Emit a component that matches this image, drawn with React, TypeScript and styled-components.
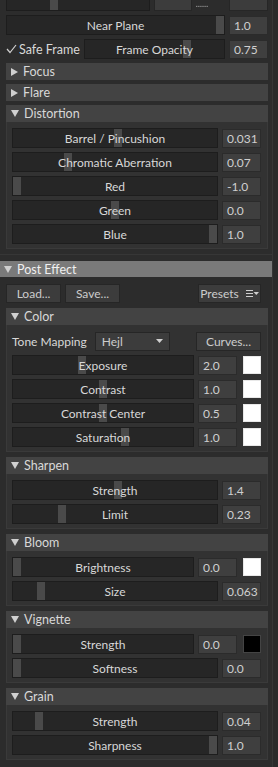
import React from 'react'
import styled, { createGlobalStyle } from 'styled-components'

const GlobalStyle = createGlobalStyle`
  html, body {
    margin: 0;
    padding: 0;
    background: #2c2c2c;
  }
  body {
    font-family: Lato, "Noto Sans", sans-serif;
    font-size: 12px;
    color: #d2d2d2;
  }
`

const Root = styled.div`
  display: flex;
  width: 278px;
  height: 767px;
  overflow: hidden;
  background: #2c2c2c;
`

const Main = styled.div`
  width: 272px;
  display: flex;
  flex-direction: column;
`

const ScrollTrack = styled.div`
  width: 6px;
  background: #2a2a2a;
  border-left: 1px solid #363636;
`

const TopBody = styled.div`
  display: flex;
  flex-direction: column;
  gap: 4px;
  margin-top: -9px;
  padding: 0 4px 5px 6px;
  border-bottom: 1px solid #363636;
`

const SectionHeader = styled.div`
  display: flex;
  align-items: center;
  gap: 5px;
  height: 16px;
  margin-top: 6px;
  padding-left: 4px;
  background: #7a7a7a;
  color: #f0f0f0;
  font-size: 12.5px;
`

const SectionBody = styled.div`
  display: flex;
  flex-direction: column;
  gap: 5px;
  padding: 6px 4px 6px 6px;
`

const SubHeader = styled.div`
  display: flex;
  align-items: center;
  gap: 5px;
  height: 17px;
  padding-left: 5px;
  background: #434343;
  color: #d8d8d8;
  font-size: 12.5px;
`

const SubBody = styled.div`
  display: flex;
  flex-direction: column;
  gap: 4px;
  padding: 6px 6px 4px 5px;
  background: #323232;
  border: 1px solid #3a3a3a;
  border-top: none;
`

const Row = styled.div`
  display: flex;
  align-items: center;
  gap: 4px;
  height: 20px;
`

const Track = styled.div<{ $width?: number }>`
  position: relative;
  flex: ${({ $width }) => ($width ? `0 0 ${$width}px` : '1')};
  height: 20px;
  box-sizing: border-box;
  background: #262626;
  border: 1px solid #1d1d1d;
  display: flex;
  align-items: center;
  justify-content: center;
  overflow: hidden;
`

const Handle = styled.div`
  position: absolute;
  top: 0;
  bottom: 0;
  width: 8px;
  background: #4a4a4a;
`

const TrackLabel = styled.span`
  position: relative;
  color: #d8d8d8;
  white-space: nowrap;
`

const ValueBox = styled.div`
  flex: 0 0 39px;
  height: 19px;
  box-sizing: border-box;
  padding-left: 4px;
  display: flex;
  align-items: center;
  background: #3f3f3f;
  border: 1px solid #2b2b2b;
  color: #cfcfcf;
`

const Swatch = styled.div<{ $color: string }>`
  flex: 0 0 18px;
  height: 18px;
  margin-left: 2px;
  box-sizing: border-box;
  background: ${({ $color }) => $color};
  border: 1px solid ${({ $color }) => ($color === '#000' ? '#444' : '#e8e8e8')};
`

const Button = styled.div<{ $width: number }>`
  flex: 0 0 ${({ $width }) => $width}px;
  height: 19px;
  box-sizing: border-box;
  display: flex;
  align-items: center;
  justify-content: center;
  gap: 7px;
  background: #3c3c3c;
  border: 1px solid #262626;
  color: #cccccc;
`

const Spacer = styled.div<{ $width?: number }>`
  flex: ${({ $width }) => ($width ? `0 0 ${$width}px` : '1')};
`

const CheckLabel = styled.div`
  display: flex;
  align-items: center;
  gap: 2px;
  flex: 0 0 72px;
  white-space: nowrap;
  color: #d8d8d8;
  font-size: 12.5px;
`

const PlainLabel = styled.span`
  color: #d8d8d8;
  white-space: nowrap;
  margin-right: 4px;
`

const Dropdown = styled.div`
  flex: 0 0 75px;
  height: 19px;
  box-sizing: border-box;
  display: flex;
  align-items: center;
  justify-content: space-between;
  padding: 0 6px;
  background: #3c3c3c;
  border: 1px solid #262626;
  color: #cccccc;
`

const Arrow = ({ open }: { open: boolean }) =>
  open ? (
    <svg width="8" height="7" viewBox="0 0 8 7">
      <polygon points="0,0 8,0 4,7" fill="#d0d0d0" />
    </svg>
  ) : (
    <svg width="7" height="8" viewBox="0 0 7 8">
      <polygon points="0,0 7,4 0,8" fill="#d0d0d0" />
    </svg>
  )

const Check = () => (
  <svg width="11" height="10" viewBox="0 0 11 10">
    <polyline points="1,5 4,8.5 10,1" fill="none" stroke="#d0d0d0" strokeWidth="1.2" />
  </svg>
)

const MenuIcon = () => (
  <svg width="13" height="7" viewBox="0 0 13 7">
    <rect x="0" y="0" width="7" height="1" fill="#cfcfcf" />
    <rect x="0" y="3" width="7" height="1" fill="#cfcfcf" />
    <rect x="0" y="6" width="7" height="1" fill="#cfcfcf" />
    <polygon points="7.5,2 13,2 10.25,5" fill="#cfcfcf" />
  </svg>
)

const SmallDown = () => (
  <svg width="7" height="4" viewBox="0 0 7 4">
    <polygon points="0,0 7,0 3.5,4" fill="#d0d0d0" />
  </svg>
)

const Dots = () => (
  <svg width="30" height="20" viewBox="0 0 30 20">
    {[0, 3, 6, 9, 12, 15].map((x) => (
      <rect key={x} x={x} y="17" width="2" height="1" fill="#bdbdbd" />
    ))}
  </svg>
)

const Slider = ({ label, pos, width }: { label?: string; pos: number; width?: number }) => (
  <Track $width={width}>
    <Handle style={{ left: `calc((100% - 8px) * ${pos})` }} />
    {label && <TrackLabel>{label}</TrackLabel>}
  </Track>
)

type Param = { label: string; pos: number; value: string; swatch?: string }

const ParamRow = ({ label, pos, value, swatch }: Param) => (
  <Row>
    <Slider label={label} pos={pos} />
    <ValueBox>{value}</ValueBox>
    {swatch && <Swatch $color={swatch} />}
  </Row>
)

const Group = ({ title, children }: { title: string; children: React.ReactNode }) => (
  <div>
    <SubHeader>
      <Arrow open />
      {title}
    </SubHeader>
    <SubBody>{children}</SubBody>
  </div>
)

const Collapsed = ({ title }: { title: string }) => (
  <SubHeader>
    <Arrow open={false} />
    {title}
  </SubHeader>
)

const distortion: Param[] = [
  { label: 'Barrel / Pincushion', pos: 0.515, value: '0.031' },
  { label: 'Chromatic Aberration', pos: 0.26, value: '0.07' },
  { label: 'Red', pos: 0, value: '-1.0' },
  { label: 'Green', pos: 0.5, value: '0.0' },
  { label: 'Blue', pos: 1, value: '1.0' },
]

const color: Param[] = [
  { label: 'Exposure', pos: 0.376, value: '2.0', swatch: '#fff' },
  { label: 'Contrast', pos: 0.5, value: '1.0', swatch: '#fff' },
  { label: 'Contrast Center', pos: 0.5, value: '0.5', swatch: '#fff' },
  { label: 'Saturation', pos: 0.63, value: '1.0', swatch: '#fff' },
]

const sharpen: Param[] = [
  { label: 'Strength', pos: 0.515, value: '1.4' },
  { label: 'Limit', pos: 0.23, value: '0.23' },
]

const bloom: Param[] = [
  { label: 'Brightness', pos: 0, value: '0.0', swatch: '#fff' },
  { label: 'Size', pos: 0.122, value: '0.063' },
]

const vignette: Param[] = [
  { label: 'Strength', pos: 0, value: '0.0', swatch: '#000' },
  { label: 'Softness', pos: 0, value: '0.0' },
]

const grain: Param[] = [
  { label: 'Strength', pos: 0.112, value: '0.04' },
  { label: 'Sharpness', pos: 1, value: '1.0' },
]

const App = () => (
  <>
    <GlobalStyle />
    <Root>
      <Main>
        <TopBody>
          <Row>
            <Slider pos={0.32} width={144} />
            <Button $width={38} />
            <Dots />
            <Spacer $width={4} />
            <Button $width={39} />
          </Row>
          <Row>
            <Slider label="Near Plane" pos={1} />
            <ValueBox>1.0</ValueBox>
          </Row>
          <Row>
            <CheckLabel>
              <Check />
              Safe Frame
            </CheckLabel>
            <Slider label="Frame Opacity" pos={0.75} />
            <ValueBox>0.75</ValueBox>
          </Row>
          <Collapsed title="Focus" />
          <Collapsed title="Flare" />
          <Group title="Distortion">
            {distortion.map((p) => (
              <ParamRow key={p.label} {...p} />
            ))}
          </Group>
        </TopBody>

        <SectionHeader>
          <Arrow open />
          Post Effect
        </SectionHeader>
        <SectionBody>
          <Row>
            <Button $width={55}>Load...</Button>
            <Button $width={55}>Save...</Button>
            <Spacer />
            <Button $width={63}>
              Presets
              <MenuIcon />
            </Button>
            <Spacer $width={3} />
          </Row>
          <Group title="Color">
            <Row>
              <PlainLabel>Tone Mapping</PlainLabel>
              <Dropdown>
                Hejl
                <SmallDown />
              </Dropdown>
              <Spacer />
              <Button $width={65}>Curves...</Button>
            </Row>
            {color.map((p) => (
              <ParamRow key={p.label} {...p} />
            ))}
          </Group>
          <Group title="Sharpen">
            {sharpen.map((p) => (
              <ParamRow key={p.label} {...p} />
            ))}
          </Group>
          <Group title="Bloom">
            {bloom.map((p) => (
              <ParamRow key={p.label} {...p} />
            ))}
          </Group>
          <Group title="Vignette">
            {vignette.map((p) => (
              <ParamRow key={p.label} {...p} />
            ))}
          </Group>
          <Group title="Grain">
            {grain.map((p) => (
              <ParamRow key={p.label} {...p} />
            ))}
          </Group>
        </SectionBody>
      </Main>
      <ScrollTrack />
    </Root>
  </>
)

export default App
